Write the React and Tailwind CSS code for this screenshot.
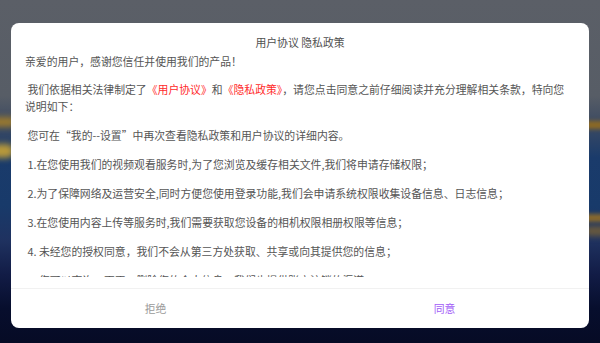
import * as React from "react";

const PARAGRAPHS = [
  " 您可在\u201c我的--设置\u201d中再次查看隐私政策和用户协议的详细内容。",
  " 1.在您使用我们的视频观看服务时,为了您浏览及缓存相关文件,我们将申请存储权限；",
  " 2.为了保障网络及运营安全,同时方便您使用登录功能,我们会申请系统权限收集设备信息、日志信息；",
  " 3.在您使用内容上传等服务时,我们需要获取您设备的相机权限相册权限等信息；",
  " 4. 未经您的授权同意，我们不会从第三方处获取、共享或向其提供您的信息；",
  " 5. 您可以查询、更正、删除您的个人信息，我们也提供账户注销的渠道。",
];

// blurred picture behind the dialog
const Backdrop = () => (
  <div className="absolute inset-0 overflow-hidden bg-[linear-gradient(180deg,#5b5f67_0%,#575d66_28%,#3c4a62_36%,#1a3b6b_46%,#183a6a_60%,#1f3260_70%,#121c46_80%,#070e2d_90%,#060b25_100%)]">
    <div className="absolute left-[-14px] top-[117px] h-[10px] w-[30px] rounded-full bg-[#9b7a2e] blur-[3px]" />
    <div className="absolute left-[-10px] top-[144px] h-[14px] w-[24px] rounded-full bg-[#b8993a] blur-[3px]" />
    <div className="absolute right-[-14px] top-[121px] h-[8px] w-[34px] rounded-full bg-[#8d6a24] blur-[2px]" />
    <div className="absolute right-[-10px] top-[214px] h-[8px] w-[30px] rounded-full bg-[#8b6a2c] blur-[2px]" />
    <div className="absolute right-[-10px] top-[226px] h-[10px] w-[26px] rounded-full bg-[#6b5a3c] blur-[3px]" />
  </div>
);

export default function App() {
  return (
    <div
      className="relative h-[343px] w-full overflow-hidden"
      style={{ fontFamily: '"Noto Sans CJK SC", "Noto Sans", sans-serif' }}
    >
      <Backdrop />
      <div className="relative flex justify-center px-[11px] pt-[23px]">
        <div className="flex h-[305px] w-full flex-col rounded-[8px] bg-white">
          <div className="pt-[11px] text-center text-[10.85px] leading-[17px] text-[#4f4f4f]">
            用户协议 隐私政策
          </div>
          <div className="mt-[2px] h-[224px] overflow-hidden px-[14px] text-[10.85px] leading-[17px] text-[#555]">
            <p>亲爱的用户，感谢您信任并使用我们的产品！</p>
            <p className="mt-[10.5px] whitespace-pre">
              {" 我们依据相关法律制定了"}
              <span className="text-[#ff2a2a]">《用户协议》</span>和
              <span className="text-[#ff2a2a]">《隐私政策》</span>
              {"，请您点击同意之前仔细阅读并充分理解相关条款，特向您"}
              <br />
              说明如下：
            </p>
            {PARAGRAPHS.map((text, i) => (
              <p key={i} className="mt-[12px] whitespace-pre">
                {text}
              </p>
            ))}
          </div>
          <div className="mt-[11px] flex flex-1 border-t border-[#f1f1f1] text-[10.85px]">
            <button className="flex flex-1 items-center justify-center text-[#9a9a9a]">
              拒绝
            </button>
            <button className="flex flex-1 items-center justify-center text-[#a35cf7]">
              同意
            </button>
          </div>
        </div>
      </div>
    </div>
  );
}
